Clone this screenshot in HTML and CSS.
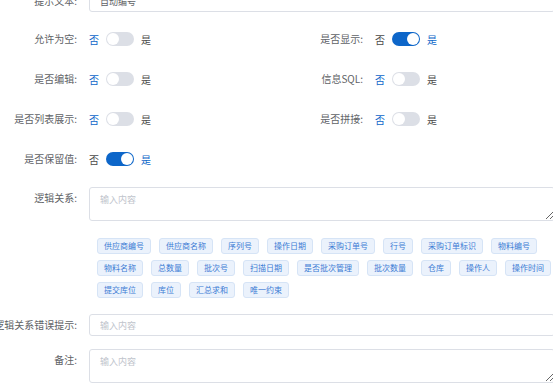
FILE: index.html
```html
<!DOCTYPE html>
<html lang="zh-CN">
<head>
    <meta charset="UTF-8">
    <meta name="viewport" content="width=device-width, initial-scale=1.0">
    <title>字段设置</title>
    <link rel="stylesheet" href="styles.css">
</head>
<body>

<form class="form">

    <!-- 提示文本 -->
    <div class="item item-top">
        <label class="label">提示文本:</label>
        <div class="control">
            <input type="text" class="input" value="自动编号">
        </div>
    </div>

    <!-- Switch rows -->
    <div class="cols">
        <div class="item">
            <label class="label">允许为空:</label>
            <div class="switch"><span class="sw-text active">否</span><span class="sw-core"></span><span class="sw-text">是</span></div>
        </div>
        <div class="item">
            <label class="label">是否显示:</label>
            <div class="switch on"><span class="sw-text">否</span><span class="sw-core"></span><span class="sw-text active">是</span></div>
        </div>
        <div class="item">
            <label class="label">是否编辑:</label>
            <div class="switch"><span class="sw-text active">否</span><span class="sw-core"></span><span class="sw-text">是</span></div>
        </div>
        <div class="item">
            <label class="label">信息SQL:</label>
            <div class="switch"><span class="sw-text active">否</span><span class="sw-core"></span><span class="sw-text">是</span></div>
        </div>
        <div class="item">
            <label class="label">是否列表展示:</label>
            <div class="switch"><span class="sw-text active">否</span><span class="sw-core"></span><span class="sw-text">是</span></div>
        </div>
        <div class="item">
            <label class="label">是否拼接:</label>
            <div class="switch"><span class="sw-text active">否</span><span class="sw-core"></span><span class="sw-text">是</span></div>
        </div>
        <div class="item">
            <label class="label">是否保留值:</label>
            <div class="switch on"><span class="sw-text">否</span><span class="sw-core"></span><span class="sw-text active">是</span></div>
        </div>
    </div>

    <!-- 逻辑关系 -->
    <div class="item">
        <label class="label">逻辑关系:</label>
        <div class="control">
            <textarea class="textarea" placeholder="输入内容"></textarea>
            <div class="tags">
                <span class="tag">供应商编号</span>
                <span class="tag">供应商名称</span>
                <span class="tag">序列号</span>
                <span class="tag">操作日期</span>
                <span class="tag">采购订单号</span>
                <span class="tag">行号</span>
                <span class="tag">采购订单标识</span>
                <span class="tag">物料编号</span>
                <span class="tag">物料名称</span>
                <span class="tag">总数量</span>
                <span class="tag">批次号</span>
                <span class="tag">扫描日期</span>
                <span class="tag">是否批次管理</span>
                <span class="tag">批次数量</span>
                <span class="tag">仓库</span>
                <span class="tag">操作人</span>
                <span class="tag">操作时间</span>
                <span class="tag">提交库位</span>
                <span class="tag">库位</span>
                <span class="tag">汇总求和</span>
                <span class="tag">唯一约束</span>
            </div>
        </div>
    </div>

    <div class="item item-error">
        <label class="label">逻辑关系错误提示:</label>
        <div class="control">
            <input type="text" class="input" placeholder="输入内容">
        </div>
    </div>

    <div class="item">
        <label class="label">备注:</label>
        <div class="control">
            <textarea class="textarea" placeholder="输入内容"></textarea>
        </div>
    </div>

</form>

</body>
</html>
```

FILE: styles.css
```css
html, body {
    margin: 0;
    padding: 0;
    height: 388px;
    overflow: hidden;
    background-color: #fff;
}
body {
    font-family: "Noto Sans CJK SC", "Noto Sans", sans-serif;
    color: #606266;
}
.form {
    width: 578px;
    margin: 0 0 0 -23px;
}
.item {
    display: flex;
    align-items: flex-start;
}
.item-top {
    margin-top: -10px;
    margin-bottom: 16px;
}
.label {
    flex: 0 0 112px;
    box-sizing: border-box;
    padding-right: 12px;
    text-align: right;
    white-space: nowrap;
    font-size: 10px;
    line-height: 22px;
    color: #606266;
}
.control {
    flex: 1;
    min-width: 0;
}
.cols {
    display: grid;
    grid-template-columns: 286px 1fr;
    row-gap: 18px;
    margin-bottom: 17px;
}
.input, .textarea {
    display: block;
    width: 100%;
    box-sizing: border-box;
    border: 1px solid #dcdfe6;
    border-radius: 3px;
    font-family: inherit;
    font-size: 9px;
    color: #606266;
    background: #fff;
    outline: none;
    margin: 0;
}
.input {
    height: 22px;
    padding: 0 10px;
    line-height: 20px;
}
.textarea {
    height: 34px;
    padding: 5px 10px;
    line-height: 13.5px;
    resize: vertical;
}
.input::placeholder, .textarea::placeholder {
    color: #c0c4cc;
}
.switch {
    display: flex;
    align-items: center;
    height: 22px;
    font-size: 10px;
}
.sw-text {
    color: #4a4a4a;
}
.sw-text.active {
    color: #0d66c9;
}
.sw-core {
    position: relative;
    width: 28px;
    height: 14px;
    margin: 0 7px;
    border-radius: 7px;
    background-color: #dcdfe6;
}
.sw-core::after {
    content: "";
    position: absolute;
    top: 1px;
    left: 1px;
    width: 12px;
    height: 12px;
    border-radius: 50%;
    background: #fff;
}
.switch.on .sw-core {
    background-color: #0d66c9;
}
.switch.on .sw-core::after {
    left: 15px;
}
.tags {
    display: flex;
    flex-wrap: wrap;
    gap: 6px 8px;
    margin: 17px 0 16px;
    padding-left: 8px;
}
.tag {
    height: 16px;
    box-sizing: border-box;
    padding: 0 6px;
    border: 1px solid #d6e4f6;
    border-radius: 3px;
    background-color: #ebf2fc;
    color: #3b7bd4;
    font-size: 8px;
    line-height: 14px;
    white-space: nowrap;
}
.item-error {
    margin-bottom: 13px;
}
```
